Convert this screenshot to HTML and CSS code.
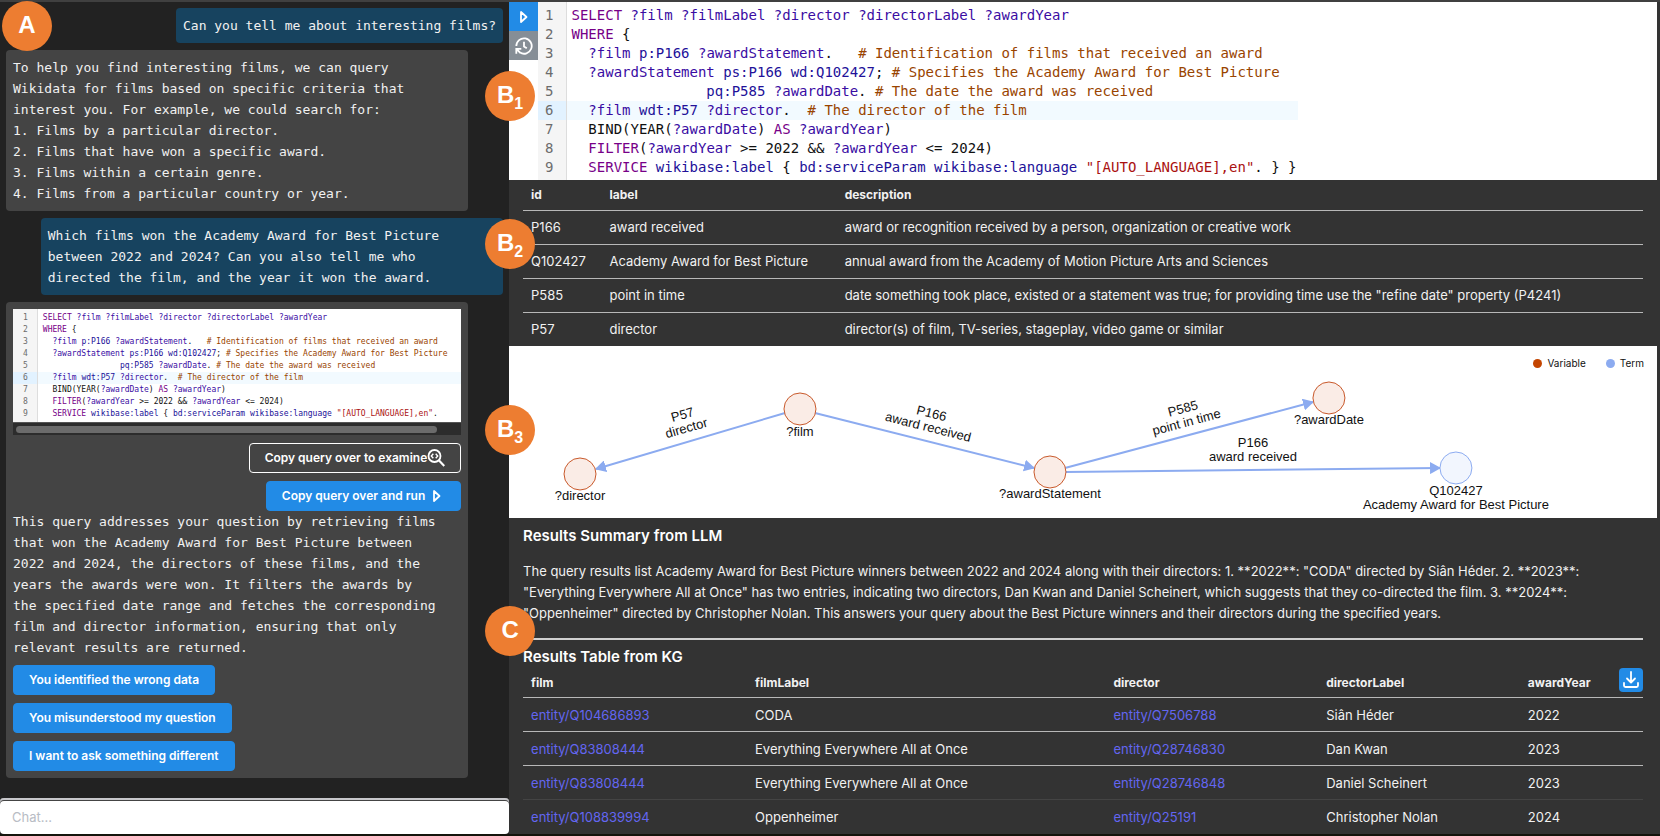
FILE: index.html
```html
<!DOCTYPE html>
<html lang="en">
<head>
<meta charset="utf-8">
<title>Wikidata query assistant</title>
<link rel="stylesheet" href="styles.css">
</head>
<body>
<div class="app">
  <section class="chat">
    <div class="messages">
      <p class="bubble user">Can you tell me about interesting films?</p>
      <p class="bubble bot">To help you find interesting films, we can query
Wikidata for films based on specific criteria that
interest you. For example, we could search for:
1. Films by a particular director.
2. Films that have won a specific award.
3. Films within a certain genre.
4. Films from a particular country or year.</p>
      <p class="bubble user">Which films won the Academy Award for Best Picture
between 2022 and 2024? Can you also tell me who
directed the film, and the year it won the award.</p>
      <div class="bubble bot">
        <div class="editor small">
          <div class="gutter"><div>1</div><div>2</div><div>3</div><div>4</div><div>5</div><div class="active">6</div><div>7</div><div>8</div><div>9</div></div>
          <div class="code"><div><i class="k">SELECT</i> <i class="v">?film</i> <i class="v">?filmLabel</i> <i class="v">?director</i> <i class="v">?directorLabel</i> <i class="v">?awardYear</i></div><div><i class="k">WHERE</i> {</div><div>  <i class="v">?film</i> <i class="a">p:P166</i> <i class="v">?awardStatement</i>.   <i class="c"># Identification of films that received an award</i></div><div>  <i class="v">?awardStatement</i> <i class="a">ps:P166</i> <i class="a">wd:Q102427</i>; <i class="c"># Specifies the Academy Award for Best Picture</i></div><div>                <i class="a">pq:P585</i> <i class="v">?awardDate</i>. <i class="c"># The date the award was received</i></div><div class="active">  <i class="v">?film</i> <i class="a">wdt:P57</i> <i class="v">?director</i>.  <i class="c"># The director of the film</i></div><div>  BIND(YEAR(<i class="v">?awardDate</i>) <i class="k">AS</i> <i class="v">?awardYear</i>)</div><div>  <i class="k">FILTER</i>(<i class="v">?awardYear</i> &gt;= 2022 &amp;&amp; <i class="v">?awardYear</i> &lt;= 2024)</div><div>  <i class="k">SERVICE</i> <i class="a">wikibase:label</i> { <i class="a">bd:serviceParam</i> <i class="a">wikibase:language</i> <i class="s">"[AUTO_LANGUAGE],en"</i>.</div></div>
        </div>
        <div class="scroll-track"><div class="scroll-thumb"></div></div>
        <div class="actions">
          <button class="btn outline" type="button">Copy query over to examine<svg width="18" height="18" viewBox="0 0 18 18" fill="none" stroke="currentColor" stroke-width="1.800"><circle cx="7.500" cy="7" r="6"/><path d="M11.800 11.300 17.300 17" stroke-width="2.200"/><path d="M6.300 4.800 4.300 7l2 2.200M8.700 4.800l2 2.200-2 2.200" stroke-width="1.400"/></svg></button>
          <button class="btn" type="button">Copy query over and run<svg class="play" width="8" height="12" viewBox="0 0 8 12" fill="none" stroke="currentColor" stroke-width="1.800" stroke-linejoin="round"><path d="M1 1v10l5.500-5z"/></svg></button>
        </div>
        <p class="text">This query addresses your question by retrieving films
that won the Academy Award for Best Picture between
2022 and 2024, the directors of these films, and the
years the awards were won. It filters the awards by
the specified date range and fetches the corresponding
film and director information, ensuring that only
relevant results are returned.</p>
        <div class="replies">
          <button class="btn" type="button">You identified the wrong data</button>
          <button class="btn" type="button">You misunderstood my question</button>
          <button class="btn" type="button">I want to ask something different</button>
        </div>
      </div>
    </div>
    <input class="chat-input" type="text" placeholder="Chat..." aria-label="Chat">
    <span class="badge badge-a">A</span>
  </section>

  <main class="results">
    <section class="query">
      <div class="tools">
        <button class="tool run" type="button" aria-label="Run query"><svg width="8" height="12" viewBox="0 0 8 12" fill="none" stroke="currentColor" stroke-width="1.800" stroke-linejoin="round"><path d="M1 1v10l5.500-5z"/></svg></button>
        <button class="tool history" type="button" aria-label="Query history"><svg width="18" height="18" viewBox="0 0 18 18" fill="none" stroke="currentColor" stroke-width="1.800"><path d="M1.300 9A7.700 7.700 0 1 1 5 15.600"/><path d="M1.300 16.800v-5h5M1.500 12 5.300 15.800"/><path d="M9 4.800v4.700l2.800 1.800"/></svg></button>
      </div>
      <div class="editor">
        <div class="gutter"><div>1</div><div>2</div><div>3</div><div>4</div><div>5</div><div class="active">6</div><div>7</div><div>8</div><div>9</div></div>
        <div class="code"><div><i class="k">SELECT</i> <i class="v">?film</i> <i class="v">?filmLabel</i> <i class="v">?director</i> <i class="v">?directorLabel</i> <i class="v">?awardYear</i></div><div><i class="k">WHERE</i> {</div><div>  <i class="v">?film</i> <i class="a">p:P166</i> <i class="v">?awardStatement</i>.   <i class="c"># Identification of films that received an award</i></div><div>  <i class="v">?awardStatement</i> <i class="a">ps:P166</i> <i class="a">wd:Q102427</i>; <i class="c"># Specifies the Academy Award for Best Picture</i></div><div>                <i class="a">pq:P585</i> <i class="v">?awardDate</i>. <i class="c"># The date the award was received</i></div><div class="active">  <i class="v">?film</i> <i class="a">wdt:P57</i> <i class="v">?director</i>.  <i class="c"># The director of the film</i></div><div>  BIND(YEAR(<i class="v">?awardDate</i>) <i class="k">AS</i> <i class="v">?awardYear</i>)</div><div>  <i class="k">FILTER</i>(<i class="v">?awardYear</i> &gt;= 2022 &amp;&amp; <i class="v">?awardYear</i> &lt;= 2024)</div><div>  <i class="k">SERVICE</i> <i class="a">wikibase:label</i> { <i class="a">bd:serviceParam</i> <i class="a">wikibase:language</i> <i class="s">"[AUTO_LANGUAGE],en"</i>. } }</div></div>
      </div>
      <span class="badge badge-b1">B<sub>1</sub></span>
    </section>

    <section class="panel">
      <table class="grid">
        <colgroup><col class="col-id"><col class="col-label"><col></colgroup>
        <thead><tr><th>id</th><th>label</th><th>description</th></tr></thead>
        <tbody>
          <tr><td>P166</td><td>award received</td><td>award or recognition received by a person, organization or creative work</td></tr>
          <tr><td>Q102427</td><td>Academy Award for Best Picture</td><td>annual award from the Academy of Motion Picture Arts and Sciences</td></tr>
          <tr><td>P585</td><td>point in time</td><td>date something took place, existed or a statement was true; for providing time use the "refine date" property (P4241)</td></tr>
          <tr><td>P57</td><td>director</td><td>director(s) of film, TV-series, stageplay, video game or similar</td></tr>
        </tbody>
      </table>
      <span class="badge badge-b2">B<sub>2</sub></span>
    </section>

    <section class="graph">
      <svg class="diagram" viewBox="0 0 1148 172" role="img" aria-label="Query graph">
        <defs>
          <marker id="arrow" viewBox="0 0 10 10" refX="9" refY="5" markerWidth="11" markerHeight="12" markerUnits="userSpaceOnUse" orient="auto" preserveAspectRatio="none"><path class="head" d="M0 0 10 5 0 10z"/></marker>
        </defs>
        <g class="edges">
          <path d="M276 67 87 123"/>
          <path d="M306 67 525 122"/>
          <path d="M556 122 804 56"/>
          <path d="M557 126 931 122"/>
        </g>
        <g class="nodes">
          <circle cx="291" cy="63" r="16"/>
          <circle cx="71" cy="128" r="16"/>
          <circle cx="541" cy="126" r="16"/>
          <circle cx="820" cy="52" r="16"/>
          <circle class="term" cx="947" cy="122" r="16"/>
        </g>
        <g class="names">
          <text x="291" y="90">?film</text>
          <text x="71" y="154">?director</text>
          <text x="541" y="152">?awardStatement</text>
          <text x="820" y="78">?awardDate</text>
          <text x="947" y="149">Q102427</text>
          <text x="947" y="163">Academy Award for Best Picture</text>
          <g transform="translate(181 95) rotate(-16)"><text y="-23">P57</text><text y="-9">director</text></g>
          <g transform="translate(416 94) rotate(14)"><text y="-23">P166</text><text y="-9">award received</text></g>
          <g transform="translate(681 89) rotate(-15)"><text y="-23">P585</text><text y="-9">point in time</text></g>
          <g transform="translate(744 124)"><text y="-23">P166</text><text y="-9">award received</text></g>
        </g>
      </svg>
      <div class="legend"><span class="key variable">Variable</span><span class="key term">Term</span></div>
      <span class="badge badge-b3">B<sub>3</sub></span>
    </section>

    <section class="panel answer">
      <h2>Results Summary from LLM</h2>
      <p class="summary">The query results list Academy Award for Best Picture winners between 2022 and 2024 along with their directors: 1. **2022**: "CODA" directed by Siân Héder. 2. **2023**: "Everything Everywhere All at Once" has two entries, indicating two directors, Dan Kwan and Daniel Scheinert, which suggests that they co-directed the film. 3. **2024**: "Oppenheimer" directed by Christopher Nolan. This answers your query about the Best Picture winners and their directors during the specified years.</p>
      <hr>
      <h2>Results Table from KG</h2>
      <div class="table-wrap">
        <table class="grid">
          <colgroup><col class="col-film"><col class="col-film-label"><col class="col-director"><col class="col-director-label"><col></colgroup>
          <thead><tr><th>film</th><th>filmLabel</th><th>director</th><th>directorLabel</th><th>awardYear</th></tr></thead>
          <tbody>
            <tr><td><a href="#Q104686893">entity/Q104686893</a></td><td>CODA</td><td><a href="#Q7506788">entity/Q7506788</a></td><td>Siân Héder</td><td>2022</td></tr>
            <tr><td><a href="#Q83808444">entity/Q83808444</a></td><td>Everything Everywhere All at Once</td><td><a href="#Q28746830">entity/Q28746830</a></td><td>Dan Kwan</td><td>2023</td></tr>
            <tr class="dim"><td><a href="#Q83808444">entity/Q83808444</a></td><td>Everything Everywhere All at Once</td><td><a href="#Q28746848">entity/Q28746848</a></td><td>Daniel Scheinert</td><td>2023</td></tr>
            <tr><td><a href="#Q108839994">entity/Q108839994</a></td><td>Oppenheimer</td><td><a href="#Q25191">entity/Q25191</a></td><td>Christopher Nolan</td><td>2024</td></tr>
          </tbody>
        </table>
        <button class="download" type="button" aria-label="Download results"><svg width="16" height="17" viewBox="0 0 16 17" fill="none" stroke="currentColor" stroke-width="1.800" stroke-linecap="round" stroke-linejoin="round"><path d="M8 1v10M4 7.500l4 4 4-4M1 12v2.500A1.500 1.500 0 0 0 2.500 16h11a1.500 1.500 0 0 0 1.500-1.500V12"/></svg></button>
      </div>
      <span class="badge badge-c">C</span>
    </section>
  </main>
</div>
</body>
</html>
```
FILE: styles.css
```css
* { box-sizing: border-box; }

body {
  margin: 0;
  background: #14140c;
  color: #f1f1f1;
  font: 13px/21px Inter, "Liberation Sans", sans-serif;
}

p, h2 { margin: 0; }

button, input { font: inherit; }

.app {
  display: grid;
  grid-template-columns: minmax(0, 23fr) minmax(0, 52fr);
  min-height: calc(100vh - 2px);
  border-top: 2px solid #404040;
}

/* Chat column */
.chat {
  position: relative;
  display: flex;
  flex-direction: column;
  justify-content: space-between;
  background: #222;
}

.messages {
  display: flex;
  flex-direction: column;
  gap: 7px;
  padding: 6px 6px 7px;
}

.bubble {
  padding: 7px;
  border-radius: 4px;
  font-family: "DejaVu Sans Mono", monospace;
  white-space: pre;
  min-width: 0;
}

.bubble.user {
  align-self: flex-end;
  max-width: 93%;
  background: #17435f;
}

.bubble.user:nth-child(3) { width: 93%; }

.bubble.bot {
  width: 93%;
  background: #444;
}

div.bubble { white-space: normal; }

.text { white-space: pre; }

.actions {
  display: flex;
  flex-direction: column;
  align-items: flex-end;
  gap: 8px;
  padding-top: 8px;
}

.replies {
  display: flex;
  flex-direction: column;
  align-items: flex-start;
  gap: 8px;
  padding-top: 7px;
}

.btn {
  display: flex;
  align-items: center;
  height: 30px;
  padding: 0 15px;
  border: 1px solid #228be6;
  border-radius: 4px;
  background: #228be6;
  color: #fff;
  font: 600 12px/18px Inter, sans-serif;
}

.btn.outline {
  border-color: #fff;
  background: transparent;
}

.btn .play { margin: 0 4px 0 8px; }

.chat-input {
  width: 100%;
  height: 36px;
  padding: 2px 12px 0;
  border: 0;
  border-radius: 4px;
  background: #fff;
  box-shadow: inset 0 2px #c8c8cc, inset 0 3px #444;
  color: #222;
}

.chat-input::placeholder { color: #b8bcc4; }

/* SPARQL editor */
.editor {
  display: flex;
  flex: 1;
  min-width: 0;
  overflow: hidden;
  background: #fff;
  color: #111;
  font: 14px/19px "DejaVu Sans Mono", monospace;
  white-space: pre;
}

.editor i { font-style: normal; }

.gutter {
  flex: none;
  padding: 4px 0 3px;
  border-right: 1px solid #ddd;
  background: #f5f5f5;
  color: #6c6c6c;
}

.gutter div { padding: 0 12px 0 7px; }

.gutter .active { background: #e2f2ff; }

.code { flex: none; padding: 4px 0 3px; }

.code div { padding: 0 2px 0 5px; }

.code .active { background: #f2faff; }

.k { color: #770088; }
.v { color: #3a0ca3; }
.a { color: #221199; }
.c { color: #994400; }
.s { color: #aa1111; }

.editor.small { font-size: 8px; line-height: 12px; }

.small .gutter, .small .code { padding: 3px 0 2px; }

.small .code { flex: 1 0 auto; }

.small .gutter div { padding: 0 9px 0 10px; }

.scroll-track {
  height: 13px;
  padding: 3px 24px 2px 3px;
  border-top: 1px solid #555;
  background: #2c2c2c;
}

.scroll-thumb {
  height: 7px;
  border-radius: 4px;
  background: #6b6b6b;
}

/* Results column */
.results { background: #333; padding-right: 3px; }

.query {
  position: relative;
  display: flex;
  background: #fff;
}

.tools { flex: none; width: 29px; }

.tool {
  display: flex;
  align-items: center;
  justify-content: center;
  width: 100%;
  height: 29px;
  padding: 0;
  border: 0;
  color: #fff;
}

.run { background: #228be6; }

.history { background: #868e96; }

.panel { position: relative; padding: 0 14px; }

.grid {
  width: 100%;
  border-collapse: collapse;
  table-layout: fixed;
}

.grid th, .grid td {
  height: 34px;
  padding: 0 8px;
  border-bottom: 1px solid #b8b8b8;
  text-align: left;
  line-height: 20px;
}

.grid th {
  height: 30px;
  font-size: 12px;
  font-weight: 700;
}

.grid .dim td { border-bottom-color: #444; }

.grid tbody tr:last-child td { border-bottom: 0; }

.grid a { color: #6366f1; text-decoration: none; }

.col-id { width: 7%; }
.col-label { width: 21%; }
.col-film { width: 20%; }
.col-film-label { width: 32%; }
.col-director { width: 19%; }
.col-director-label { width: 18%; }

/* Query graph */
.graph {
  position: relative;
  background: #fff;
  color: #111;
}

.diagram { display: block; width: 100%; }

.edges path {
  fill: none;
  stroke: #8cabf0;
  stroke-width: 2;
  marker-end: url(#arrow);
}

.head { fill: #8cabf0; }

.nodes circle { fill: #faece6; stroke: #c8582a; }

.nodes .term { fill: #f2f6fe; stroke: #8cabf0; }

.names {
  fill: #111;
  font: 13px "Liberation Sans", Arial, sans-serif;
  text-anchor: middle;
}

.legend {
  position: absolute;
  top: 7px;
  right: 13px;
  display: flex;
  gap: 20px;
  font-size: 10px;
  line-height: 20px;
}

.key { display: flex; align-items: center; gap: 5px; }

.key::before {
  content: "";
  width: 9px;
  height: 9px;
  border-radius: 50%;
  background: #c44500;
}

.key.term::before { background: #8cabf0; }

/* Answer */
h2 {
  font-size: 15px;
  font-weight: 600;
  line-height: 22px;
  color: #fff;
}

.answer { padding-top: 7px; }

.summary { padding: 14px 40px 14px 0; }

.answer hr {
  height: 2px;
  margin: 0 0 6px;
  border: 0;
  background: #d0d0d0;
}

.table-wrap { position: relative; }

.download {
  position: absolute;
  top: 0;
  right: 0;
  display: flex;
  align-items: center;
  justify-content: center;
  width: 24px;
  height: 24px;
  padding: 0;
  border: 0;
  border-radius: 4px;
  background: #228be6;
  color: #fff;
}

/* Callout badges */
.badge {
  position: absolute;
  left: -24px;
  z-index: 2;
  width: 50px;
  height: 50px;
  border-radius: 50%;
  background: #ed7d31;
  color: #fff;
  font: bold 24px/48px "Liberation Sans", Arial, sans-serif;
  text-align: center;
}

.badge sub { font-size: 16px; line-height: 0; }

.badge-a { top: -1px; left: 2px; }
.badge-b1 { top: 69px; }
.badge-b2 { top: 39px; }
.badge-b3 { top: 59px; }
.badge-c { top: 88px; }
```
